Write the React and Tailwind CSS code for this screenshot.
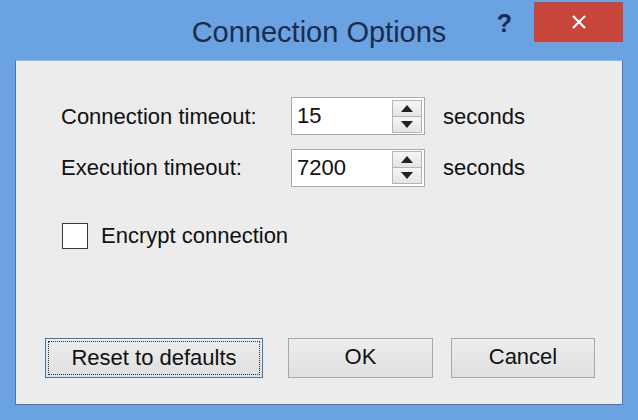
import { useState } from 'react';

const font = { fontFamily: '"Liberation Sans", Arial, sans-serif' };

function Spinner({ value, onChange }) {
  const step = (d) => onChange(String(Math.max(0, (parseInt(value, 10) || 0) + d)));
  return (
    <div className="flex items-center w-[134px] h-[38px] bg-white border border-[#a9a9a9] pr-[2px]">
      <input
        value={value}
        onChange={(e) => onChange(e.target.value)}
        className="flex-1 min-w-0 h-full pl-[5px] bg-transparent outline-none text-[22px] text-[#111]"
        style={font}
      />
      <div className="flex flex-col w-[30px] h-[33px]">
        <button onClick={() => step(1)} className="flex-1 flex items-center justify-center bg-gradient-to-b from-[#f6f6f6] to-[#e4e4e4] border border-[#b5b5b5]">
          <svg width="12" height="7" viewBox="0 0 12 7"><path d="M6 0 L12 7 L0 7 Z" fill="#222" /></svg>
        </button>
        <button onClick={() => step(-1)} className="flex-1 flex items-center justify-center bg-gradient-to-b from-[#f6f6f6] to-[#e4e4e4] border border-t-0 border-[#b5b5b5]">
          <svg width="12" height="7" viewBox="0 0 12 7"><path d="M0 0 L12 0 L6 7 Z" fill="#222" /></svg>
        </button>
      </div>
    </div>
  );
}

export default function App() {
  const [conn, setConn] = useState('15');
  const [exec, setExec] = useState('7200');
  const [encrypt, setEncrypt] = useState(false);

  const reset = () => { setConn('15'); setExec('7200'); setEncrypt(false); };

  return (
    <div className="w-[638px] h-[420px] bg-[#6aa2e2] flex flex-col text-[#111]" style={font}>
      <div className="h-[60px] grid grid-cols-[1fr_auto_1fr] shrink-0">
        <div />
        <div className="pt-[15px] text-[29px] leading-[34px] text-[#1b2d4f]">Connection Options</div>
        <div className="flex justify-end items-start pr-[15px] pt-[2px]">
          <div className="mt-[9px] mr-[22px] text-[25px] leading-[25px] font-bold text-[#1b2d4f]">?</div>
          <button className="w-[89px] h-[40px] bg-[#c8453c] flex items-center justify-center">
            <svg width="16" height="16" viewBox="0 0 16 16"><path d="M2 2 L14 14 M14 2 L2 14" stroke="#fff" strokeWidth="2.2" /></svg>
          </button>
        </div>
      </div>

      <div className="mx-[15px] mb-[15px] flex-1 flex flex-col bg-[#ececec] border border-[#4f76a4] border-t-[#8fb3dc] text-[22px]">
        <div className="pl-[45px] pt-[36px] flex flex-col">
          <div className="flex items-center h-[38px]">
            <span className="w-[230px]">Connection timeout:</span>
            <Spinner value={conn} onChange={setConn} />
            <span className="ml-[18px]">seconds</span>
          </div>
          <div className="flex items-center h-[39px] mt-[13px]">
            <span className="w-[230px]">Execution timeout:</span>
            <Spinner value={exec} onChange={setExec} />
            <span className="ml-[18px]">seconds</span>
          </div>
          <label className="flex items-center mt-[32px] cursor-pointer select-none">
            <span
              onClick={() => setEncrypt(!encrypt)}
              className="w-[26px] h-[26px] bg-white border border-[#3a3a3a] flex items-center justify-center ml-[1px]"
            >
              {encrypt && <svg width="16" height="16" viewBox="0 0 16 16"><path d="M2 8 L6 12 L14 3" stroke="#222" strokeWidth="2" fill="none" /></svg>}
            </span>
            <span className="ml-[13px]">Encrypt connection</span>
          </label>
        </div>

        <div className="mt-auto mb-[26px] pl-[29px] flex items-center">
          <button onClick={reset} className="w-[218px] h-[40px] bg-gradient-to-b from-[#ececec] to-[#e0e0e0] border border-[#3d7bab] p-[2px]">
            <span className="flex items-center justify-center w-full h-full pb-[2px] border border-dotted border-[#333]">Reset to defaults</span>
          </button>
          <button className="ml-[25px] w-[145px] h-[40px] pb-[3px] bg-gradient-to-b from-[#ececec] to-[#e0e0e0] border border-[#a8a8a8]">OK</button>
          <button className="ml-[18px] w-[144px] h-[40px] pb-[3px] bg-gradient-to-b from-[#ececec] to-[#e0e0e0] border border-[#a8a8a8]">Cancel</button>
        </div>
      </div>
    </div>
  );
}
